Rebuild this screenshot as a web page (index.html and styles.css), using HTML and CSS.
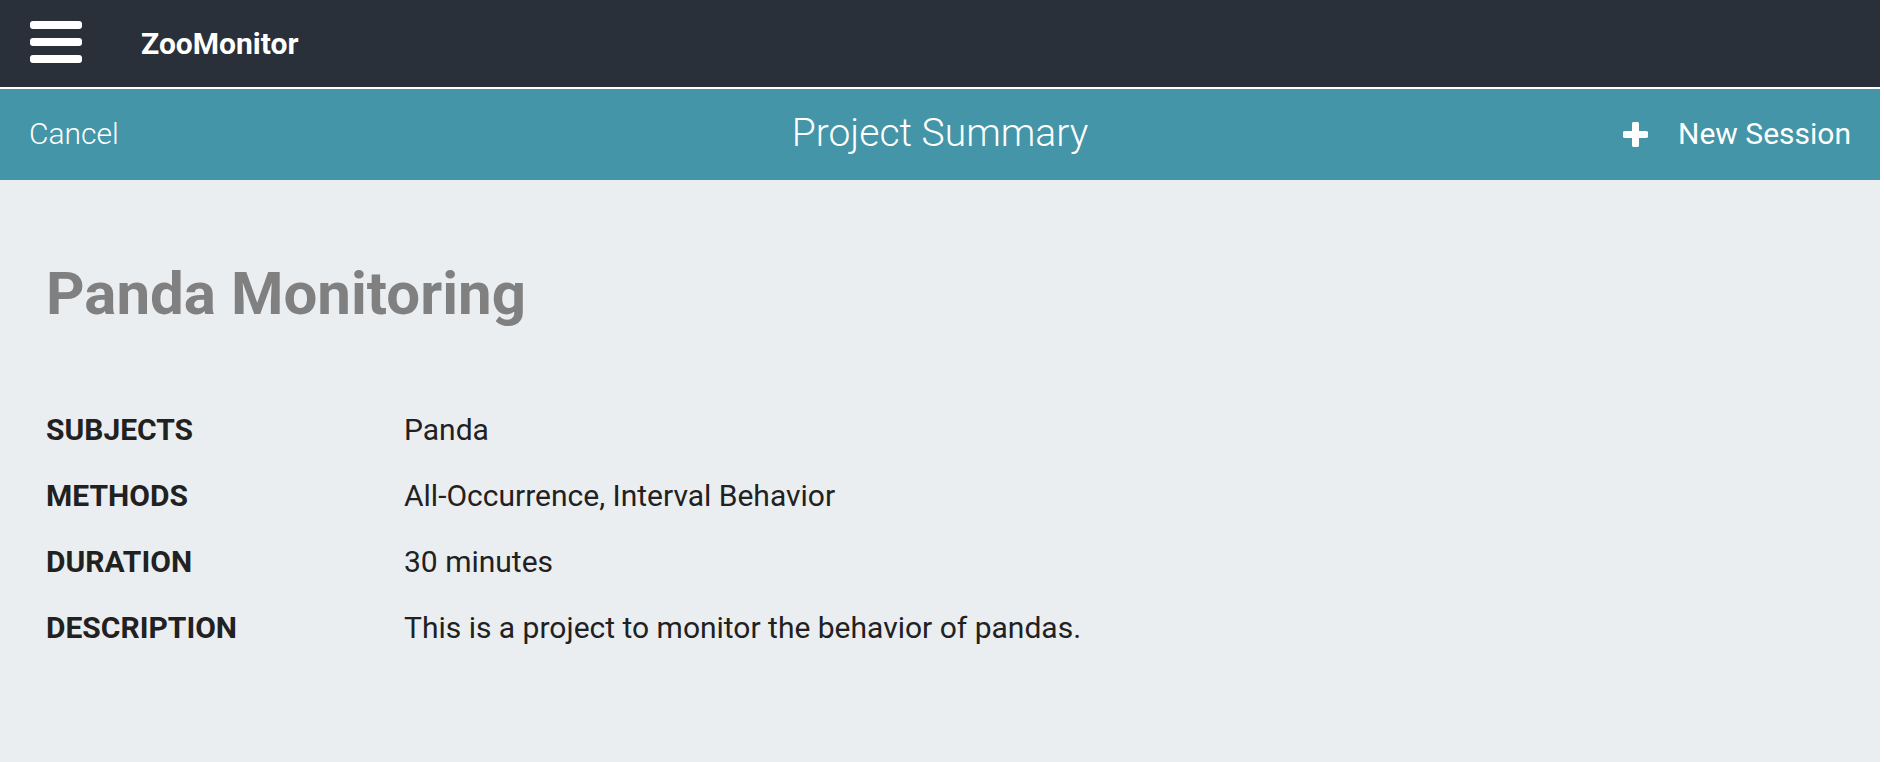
FILE: index.html
```html
<!DOCTYPE html>
<html lang="en">
<head>
<meta charset="utf-8">
<title>ZooMonitor - Project Summary</title>
<link rel="stylesheet" href="styles.css">
</head>
<body>
<div class="app">
  <header class="topbar">
    <button class="hamburger" aria-label="Menu">
      <span></span><span></span><span></span>
    </button>
    <span class="brand">ZooMonitor</span>
  </header>
  <nav class="subbar">
    <a class="cancel" href="#">Cancel</a>
    <h2 class="page-title">Project Summary</h2>
    <a class="new-session" href="#">
      <svg class="plus" width="25" height="25" viewBox="0 0 25 25" aria-hidden="true">
        <path d="M12.5 2.5v20M2.5 12.5h20" stroke="#fff" stroke-width="7" stroke-linecap="round" fill="none"/>
      </svg>
      <span>New Session</span>
    </a>
  </nav>
  <main class="content">
    <h1 class="project-name">Panda Monitoring</h1>
    <dl class="details">
      <dt>SUBJECTS</dt><dd>Panda</dd>
      <dt>METHODS</dt><dd>All-Occurrence, Interval Behavior</dd>
      <dt>DURATION</dt><dd>30 minutes</dd>
      <dt>DESCRIPTION</dt><dd>This is a project to monitor the behavior of pandas.</dd>
    </dl>
  </main>
</div>
</body>
</html>
```
FILE: styles.css
```css
*, *::before, *::after {
  box-sizing: border-box;
}
html, body {
  margin: 0;
  padding: 0;
  height: 100%;
}
body {
  background: #ffffff;
  font-family: Roboto, "Liberation Sans", Arial, sans-serif;
}
.app {
  margin-right: 4px;
  min-height: 100%;
  display: flex;
  flex-direction: column;
  background: #ebeef1;
}
.topbar {
  height: 89px;
  background: #293039;
  border-bottom: 2px solid #ffffff;
  display: flex;
  align-items: center;
  padding-left: 30px;
  gap: 59px;
}
.hamburger {
  display: flex;
  flex-direction: column;
  gap: 9px;
  padding: 0;
  margin: -3px 0 0 0;
  border: 0;
  background: transparent;
  width: 52px;
}
.hamburger span {
  display: block;
  height: 8px;
  width: 52px;
  border-radius: 3px;
  background: #ffffff;
}
.brand {
  color: #ffffff;
  font-weight: 700;
  font-size: 30px;
  line-height: 30px;
}
.subbar {
  height: 91px;
  background: #4395a7;
  display: grid;
  grid-template-columns: 1fr auto 1fr;
  align-items: center;
  padding: 0 29px 2px 29px;
  color: #ffffff;
}
.cancel {
  justify-self: start;
  color: #ffffff;
  text-decoration: none;
  font-weight: 300;
  font-size: 30px;
  line-height: 30px;
}
.page-title {
  margin: 0 0 2px 0;
  font-weight: 300;
  font-size: 39px;
  line-height: 40px;
}
.new-session {
  justify-self: end;
  display: flex;
  align-items: center;
  gap: 30px;
  color: #ffffff;
  text-decoration: none;
  font-weight: 400;
  font-size: 30px;
  line-height: 30px;
}
.plus {
  display: block;
  margin-top: 2px;
}
.content {
  flex: 1;
  padding: 78px 46px 40px 46px;
}
.project-name {
  margin: 0;
  color: #808080;
  font-weight: 700;
  font-size: 60px;
  line-height: 72px;
}
.details {
  margin: 82px 0 0 0;
  display: grid;
  grid-template-columns: 358px 1fr;
  row-gap: 30px;
  font-size: 30px;
  line-height: 36px;
  color: #212121;
}
.details dt {
  font-weight: 700;
}
.details dd {
  margin: 0;
  font-weight: 400;
}
```
